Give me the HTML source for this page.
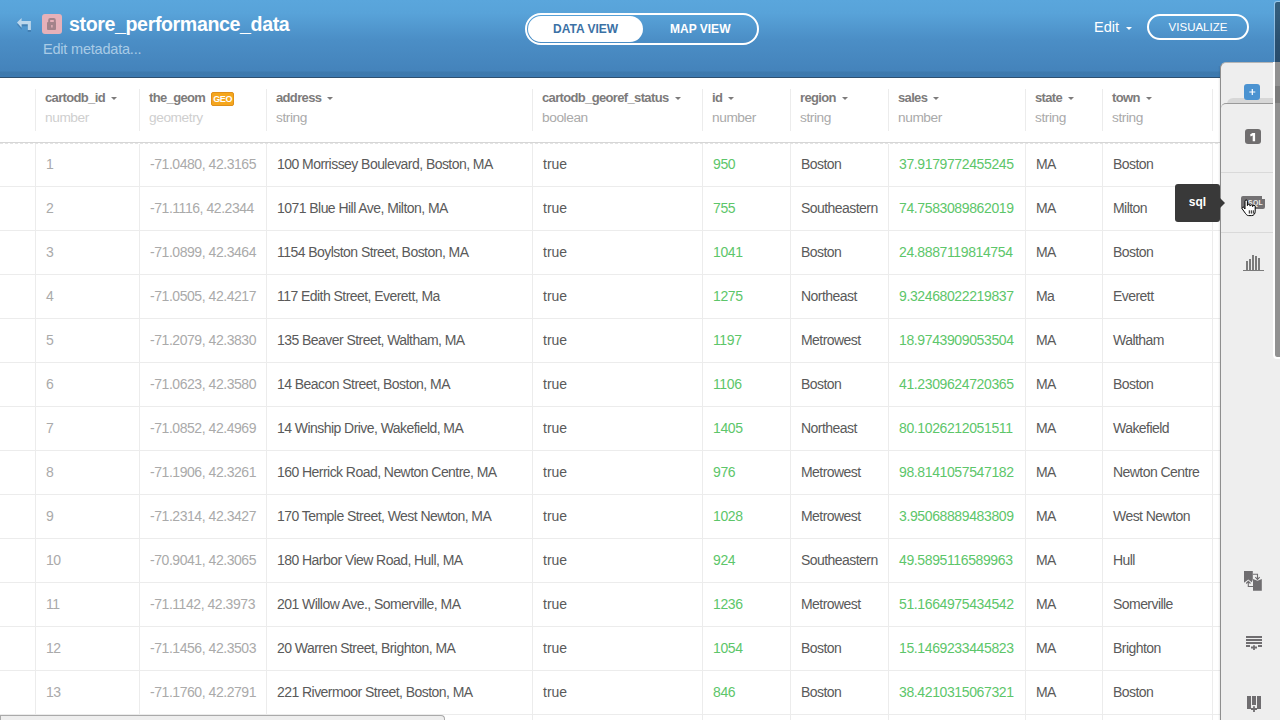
<!DOCTYPE html><html><head><meta charset="utf-8"><title>store_performance_data</title><style>
html,body{margin:0;padding:0;width:1280px;height:720px;overflow:hidden;background:#fff;font-family:"Liberation Sans",sans-serif;}
*{box-sizing:border-box;}
#hdr{position:absolute;left:0;top:0;width:1280px;height:78px;background:linear-gradient(#5aa6dc 0px,#58a3d9 13px,#4b8ec6 40px,#4483bb 71px,#3e7aae 72px,#3d79ad 75px,#3c7ab2 76px,#3c7ab2 77px);border-bottom:1px solid #2e5070;}
#back{position:absolute;left:17px;top:17px;width:16px;height:15px;}
#lock{position:absolute;left:42px;top:14px;width:20px;height:20px;background:#e6b1b9;border-radius:3px;}
#title{position:absolute;left:69px;top:11.6px;font-size:19.6px;font-weight:bold;color:#fff;letter-spacing:-0.38px;white-space:nowrap;line-height:24px;}
#meta{position:absolute;left:43px;top:39.5px;font-size:14.5px;color:#a9cbe6;white-space:nowrap;line-height:18px;letter-spacing:-0.2px;}
#tog{position:absolute;left:525px;top:13px;width:234px;height:32px;border:2px solid #fff;border-radius:16px;}
#tog .on{position:absolute;left:1px;top:1px;width:115px;height:26px;background:#fff;border-radius:13px;}
#tog .t1{position:absolute;left:26px;top:0;line-height:28px;font-size:12px;font-weight:bold;color:#3b71a5;white-space:nowrap;}
#tog .t2{position:absolute;left:143px;top:0;line-height:28px;font-size:12px;font-weight:bold;color:#fff;white-space:nowrap;}
#edit{position:absolute;left:1094px;top:17px;font-size:14.5px;color:#fff;line-height:20px;white-space:nowrap;}
#editcar{position:absolute;left:1126px;top:27px;width:0;height:0;border-left:3px solid transparent;border-right:3px solid transparent;border-top:3px solid #fff;}
#vis{position:absolute;left:1147px;top:14px;width:102px;height:26px;border:2px solid #fff;border-radius:13px;color:#fff;font-size:11.5px;line-height:22px;text-align:center;white-space:nowrap;}
#tbl{position:absolute;left:0;top:0;width:1280px;height:720px;}
.vd{position:absolute;top:143px;width:1px;height:577px;background:#ececec;}
.vdh{position:absolute;top:89px;width:1px;height:42px;background:#ececec;}
.hb{position:absolute;left:0;top:142px;width:1220px;height:1px;background:#d6d6d6;}
.hbd{position:absolute;left:0;top:143px;width:1220px;height:1px;background:repeating-linear-gradient(90deg,#e4e4e4 0 3px,#fff 3px 5px);}
.rl{position:absolute;left:0;width:1220px;height:1px;background:#ececec;}
.hn{position:absolute;top:89px;font-size:13px;font-weight:bold;color:#7d7b7b;white-space:nowrap;line-height:18px;letter-spacing:-0.65px;}
.ht{position:absolute;top:108.5px;font-size:13.7px;color:#aaaaaa;white-space:nowrap;line-height:18px;letter-spacing:-0.42px;}
.ht.lt{color:#cfcfcf;}
.car{display:inline-block;margin-left:6px;vertical-align:middle;width:0;height:0;border-left:3px solid transparent;border-right:3px solid transparent;border-top:3px solid #7d7b7b;position:relative;top:0px;}
.gbadge{display:inline-block;margin-left:6px;width:23px;height:14px;background:#f5a61d;border:1px solid #e0901a;border-radius:2px;color:#fff;font-weight:bold;font-size:9px;line-height:13px;text-align:center;vertical-align:top;position:relative;top:3px;letter-spacing:-0.3px;}
.c{position:absolute;height:43px;line-height:43px;font-size:14px;white-space:nowrap;letter-spacing:-0.55px;}
.c.num{color:#aaaaaa;}
.c.geo{color:#aaaaaa;letter-spacing:-0.45px;}
.c.txt{color:#5a5a5a;}
.c.bool{color:#5a5a5a;letter-spacing:0;}
.c.grn{color:#5dc66a;letter-spacing:-0.38px;}
#side{position:absolute;left:1218px;top:62px;width:62px;height:658px;}
#side .shadow{position:absolute;left:0;top:4px;width:3px;height:654px;background:linear-gradient(90deg,rgba(0,0,0,0) ,rgba(0,0,0,0.12));}
#side .panel{position:absolute;left:2px;top:0;width:60px;height:658px;background:#eeeeee;border-left:1px solid #8e8e8e;border-top:1px solid #b5b5b5;border-top-left-radius:6px;}
#side .plus{position:absolute;left:26px;top:22px;width:16px;height:16px;background:#4b93d1;border-radius:3px;}
#side .shade{position:absolute;left:9px;top:36px;width:47px;height:6px;background:#d7d7d7;border-top-left-radius:6px;}
#side .tab2{position:absolute;left:3px;top:41px;width:59px;height:617px;background:#eeeeee;border-top:1px solid #9a9a9a;border-top-left-radius:5px;}
#side .one{position:absolute;left:27px;top:67px;width:16px;height:15px;background:#706e6f;border-radius:3px;color:#fff;font-weight:bold;font-size:11px;line-height:15px;text-align:center;}
#side .sep{position:absolute;left:3px;width:54px;height:1px;background:#d9d9d9;}
#side svg{position:absolute;}
#tip{position:absolute;left:1175px;top:184px;width:45px;height:38px;background:#393939;border-radius:3px;color:#fff;font-weight:bold;font-size:12px;line-height:37px;text-align:center;}
#tip:after{content:"";position:absolute;left:45px;top:14px;border-top:5px solid transparent;border-bottom:5px solid transparent;border-left:5px solid #393939;}
#scr{position:absolute;left:1274px;top:1px;width:6px;height:357px;border:1px solid rgba(255,255,255,0.35);border-right:0;border-radius:3px 0 0 3px;background:rgba(0,0,0,0.43);background-clip:padding-box;}
#scr2{position:absolute;left:1275px;top:86px;width:5px;height:17px;background:rgba(0,0,0,0.15);}
#bot{position:absolute;left:0;top:715px;width:445px;height:10px;background:#eeeeee;border-top:1px solid #aaaaaa;border-left:1px solid #aaaaaa;border-right:1px solid #aaaaaa;border-top-right-radius:4px;}
#scrw{position:absolute;left:1273px;top:62px;width:8px;height:297px;background:#fff;border-bottom-left-radius:4px;}

</style></head><body>
<div id="hdr">
<svg id="back" width="16" height="15" viewBox="0 0 16 15"><path d="M0 6.4 L4.6 2 L4.6 5 L13.9 5 L13.9 13.9 L10.8 13.9 L10.8 8.3 L4.6 8.3 L4.6 11.8 Z" fill="#2f5f8e" opacity="0.4" transform="translate(0,1)"/><path d="M0 5.4 L4.6 1 L4.6 4 L13.9 4 L13.9 12.9 L10.8 12.9 L10.8 7.3 L4.6 7.3 L4.6 10.8 Z" fill="#bcd7ec"/></svg>
<div id="lock"><svg width="20" height="20" viewBox="0 0 20 20"><path d="M7.2 9V6 a1 1 0 0 1 1-1 H11.8 a1 1 0 0 1 1 1 V9" fill="none" stroke="#a3838a" stroke-width="2"/><rect x="5" y="8" width="9" height="8" rx="1" fill="#a3838a"/><rect x="9.2" y="11" width="1.4" height="2.5" fill="#e6b1b9"/></svg></div>
<div id="title">store_performance_data</div>
<div id="meta">Edit metadata...</div>
<div id="tog"><div class="on"></div><div class="t1">DATA VIEW</div><div class="t2">MAP VIEW</div></div>
<div id="edit">Edit</div><div id="editcar"></div>
<div id="vis">VISUALIZE</div>
</div>

<div id="tbl">
<div class="vd" style="left:35px"></div>
<div class="vdh" style="left:35px"></div>
<div class="vd" style="left:139px"></div>
<div class="vdh" style="left:139px"></div>
<div class="vd" style="left:266px"></div>
<div class="vdh" style="left:266px"></div>
<div class="vd" style="left:532px"></div>
<div class="vdh" style="left:532px"></div>
<div class="vd" style="left:702px"></div>
<div class="vdh" style="left:702px"></div>
<div class="vd" style="left:790px"></div>
<div class="vdh" style="left:790px"></div>
<div class="vd" style="left:888px"></div>
<div class="vdh" style="left:888px"></div>
<div class="vd" style="left:1025px"></div>
<div class="vdh" style="left:1025px"></div>
<div class="vd" style="left:1102px"></div>
<div class="vdh" style="left:1102px"></div>
<div class="vd" style="left:1212px"></div>
<div class="vdh" style="left:1212px"></div>
<div class="hb"></div><div class="hbd"></div>
<div class="hn" style="left:45px">cartodb_id<span class="car"></span></div>
<div class="ht lt" style="left:45px">number</div>
<div class="hn" style="left:149px">the_geom<span class="gbadge">GEO</span></div>
<div class="ht lt" style="left:149px">geometry</div>
<div class="hn" style="left:276px">address<span class="car"></span></div>
<div class="ht" style="left:276px">string</div>
<div class="hn" style="left:542px">cartodb_georef_status<span class="car"></span></div>
<div class="ht" style="left:542px">boolean</div>
<div class="hn" style="left:712px">id<span class="car"></span></div>
<div class="ht" style="left:712px">number</div>
<div class="hn" style="left:800px">region<span class="car"></span></div>
<div class="ht" style="left:800px">string</div>
<div class="hn" style="left:898px">sales<span class="car"></span></div>
<div class="ht" style="left:898px">number</div>
<div class="hn" style="left:1035px">state<span class="car"></span></div>
<div class="ht" style="left:1035px">string</div>
<div class="hn" style="left:1112px">town<span class="car"></span></div>
<div class="ht" style="left:1112px">string</div>
<div class="rl" style="top:186px"></div>
<div class="c num" style="left:46px;top:143px">1</div>
<div class="c geo" style="left:150px;top:143px">-71.0480, 42.3165</div>
<div class="c txt" style="left:277px;top:143px">100 Morrissey Boulevard, Boston, MA</div>
<div class="c bool" style="left:543px;top:143px">true</div>
<div class="c grn" style="left:713px;top:143px">950</div>
<div class="c txt" style="left:801px;top:143px">Boston</div>
<div class="c grn" style="left:899px;top:143px">37.9179772455245</div>
<div class="c txt" style="left:1036px;top:143px">MA</div>
<div class="c txt" style="left:1113px;top:143px">Boston</div>
<div class="rl" style="top:230px"></div>
<div class="c num" style="left:46px;top:187px">2</div>
<div class="c geo" style="left:150px;top:187px">-71.1116, 42.2344</div>
<div class="c txt" style="left:277px;top:187px">1071 Blue Hill Ave, Milton, MA</div>
<div class="c bool" style="left:543px;top:187px">true</div>
<div class="c grn" style="left:713px;top:187px">755</div>
<div class="c txt" style="left:801px;top:187px">Southeastern</div>
<div class="c grn" style="left:899px;top:187px">74.7583089862019</div>
<div class="c txt" style="left:1036px;top:187px">MA</div>
<div class="c txt" style="left:1113px;top:187px">Milton</div>
<div class="rl" style="top:274px"></div>
<div class="c num" style="left:46px;top:231px">3</div>
<div class="c geo" style="left:150px;top:231px">-71.0899, 42.3464</div>
<div class="c txt" style="left:277px;top:231px">1154 Boylston Street, Boston, MA</div>
<div class="c bool" style="left:543px;top:231px">true</div>
<div class="c grn" style="left:713px;top:231px">1041</div>
<div class="c txt" style="left:801px;top:231px">Boston</div>
<div class="c grn" style="left:899px;top:231px">24.8887119814754</div>
<div class="c txt" style="left:1036px;top:231px">MA</div>
<div class="c txt" style="left:1113px;top:231px">Boston</div>
<div class="rl" style="top:318px"></div>
<div class="c num" style="left:46px;top:275px">4</div>
<div class="c geo" style="left:150px;top:275px">-71.0505, 42.4217</div>
<div class="c txt" style="left:277px;top:275px">117 Edith Street, Everett, Ma</div>
<div class="c bool" style="left:543px;top:275px">true</div>
<div class="c grn" style="left:713px;top:275px">1275</div>
<div class="c txt" style="left:801px;top:275px">Northeast</div>
<div class="c grn" style="left:899px;top:275px">9.32468022219837</div>
<div class="c txt" style="left:1036px;top:275px">Ma</div>
<div class="c txt" style="left:1113px;top:275px">Everett</div>
<div class="rl" style="top:362px"></div>
<div class="c num" style="left:46px;top:319px">5</div>
<div class="c geo" style="left:150px;top:319px">-71.2079, 42.3830</div>
<div class="c txt" style="left:277px;top:319px">135 Beaver Street, Waltham, MA</div>
<div class="c bool" style="left:543px;top:319px">true</div>
<div class="c grn" style="left:713px;top:319px">1197</div>
<div class="c txt" style="left:801px;top:319px">Metrowest</div>
<div class="c grn" style="left:899px;top:319px">18.9743909053504</div>
<div class="c txt" style="left:1036px;top:319px">MA</div>
<div class="c txt" style="left:1113px;top:319px">Waltham</div>
<div class="rl" style="top:406px"></div>
<div class="c num" style="left:46px;top:363px">6</div>
<div class="c geo" style="left:150px;top:363px">-71.0623, 42.3580</div>
<div class="c txt" style="left:277px;top:363px">14 Beacon Street, Boston, MA</div>
<div class="c bool" style="left:543px;top:363px">true</div>
<div class="c grn" style="left:713px;top:363px">1106</div>
<div class="c txt" style="left:801px;top:363px">Boston</div>
<div class="c grn" style="left:899px;top:363px">41.2309624720365</div>
<div class="c txt" style="left:1036px;top:363px">MA</div>
<div class="c txt" style="left:1113px;top:363px">Boston</div>
<div class="rl" style="top:450px"></div>
<div class="c num" style="left:46px;top:407px">7</div>
<div class="c geo" style="left:150px;top:407px">-71.0852, 42.4969</div>
<div class="c txt" style="left:277px;top:407px">14 Winship Drive, Wakefield, MA</div>
<div class="c bool" style="left:543px;top:407px">true</div>
<div class="c grn" style="left:713px;top:407px">1405</div>
<div class="c txt" style="left:801px;top:407px">Northeast</div>
<div class="c grn" style="left:899px;top:407px">80.1026212051511</div>
<div class="c txt" style="left:1036px;top:407px">MA</div>
<div class="c txt" style="left:1113px;top:407px">Wakefield</div>
<div class="rl" style="top:494px"></div>
<div class="c num" style="left:46px;top:451px">8</div>
<div class="c geo" style="left:150px;top:451px">-71.1906, 42.3261</div>
<div class="c txt" style="left:277px;top:451px">160 Herrick Road, Newton Centre, MA</div>
<div class="c bool" style="left:543px;top:451px">true</div>
<div class="c grn" style="left:713px;top:451px">976</div>
<div class="c txt" style="left:801px;top:451px">Metrowest</div>
<div class="c grn" style="left:899px;top:451px">98.8141057547182</div>
<div class="c txt" style="left:1036px;top:451px">MA</div>
<div class="c txt" style="left:1113px;top:451px">Newton Centre</div>
<div class="rl" style="top:538px"></div>
<div class="c num" style="left:46px;top:495px">9</div>
<div class="c geo" style="left:150px;top:495px">-71.2314, 42.3427</div>
<div class="c txt" style="left:277px;top:495px">170 Temple Street, West Newton, MA</div>
<div class="c bool" style="left:543px;top:495px">true</div>
<div class="c grn" style="left:713px;top:495px">1028</div>
<div class="c txt" style="left:801px;top:495px">Metrowest</div>
<div class="c grn" style="left:899px;top:495px">3.95068889483809</div>
<div class="c txt" style="left:1036px;top:495px">MA</div>
<div class="c txt" style="left:1113px;top:495px">West Newton</div>
<div class="rl" style="top:582px"></div>
<div class="c num" style="left:46px;top:539px">10</div>
<div class="c geo" style="left:150px;top:539px">-70.9041, 42.3065</div>
<div class="c txt" style="left:277px;top:539px">180 Harbor View Road, Hull, MA</div>
<div class="c bool" style="left:543px;top:539px">true</div>
<div class="c grn" style="left:713px;top:539px">924</div>
<div class="c txt" style="left:801px;top:539px">Southeastern</div>
<div class="c grn" style="left:899px;top:539px">49.5895116589963</div>
<div class="c txt" style="left:1036px;top:539px">MA</div>
<div class="c txt" style="left:1113px;top:539px">Hull</div>
<div class="rl" style="top:626px"></div>
<div class="c num" style="left:46px;top:583px">11</div>
<div class="c geo" style="left:150px;top:583px">-71.1142, 42.3973</div>
<div class="c txt" style="left:277px;top:583px">201 Willow Ave., Somerville, MA</div>
<div class="c bool" style="left:543px;top:583px">true</div>
<div class="c grn" style="left:713px;top:583px">1236</div>
<div class="c txt" style="left:801px;top:583px">Metrowest</div>
<div class="c grn" style="left:899px;top:583px">51.1664975434542</div>
<div class="c txt" style="left:1036px;top:583px">MA</div>
<div class="c txt" style="left:1113px;top:583px">Somerville</div>
<div class="rl" style="top:670px"></div>
<div class="c num" style="left:46px;top:627px">12</div>
<div class="c geo" style="left:150px;top:627px">-71.1456, 42.3503</div>
<div class="c txt" style="left:277px;top:627px">20 Warren Street, Brighton, MA</div>
<div class="c bool" style="left:543px;top:627px">true</div>
<div class="c grn" style="left:713px;top:627px">1054</div>
<div class="c txt" style="left:801px;top:627px">Boston</div>
<div class="c grn" style="left:899px;top:627px">15.1469233445823</div>
<div class="c txt" style="left:1036px;top:627px">MA</div>
<div class="c txt" style="left:1113px;top:627px">Brighton</div>
<div class="rl" style="top:714px"></div>
<div class="c num" style="left:46px;top:671px">13</div>
<div class="c geo" style="left:150px;top:671px">-71.1760, 42.2791</div>
<div class="c txt" style="left:277px;top:671px">221 Rivermoor Street, Boston, MA</div>
<div class="c bool" style="left:543px;top:671px">true</div>
<div class="c grn" style="left:713px;top:671px">846</div>
<div class="c txt" style="left:801px;top:671px">Boston</div>
<div class="c grn" style="left:899px;top:671px">38.4210315067321</div>
<div class="c txt" style="left:1036px;top:671px">MA</div>
<div class="c txt" style="left:1113px;top:671px">Boston</div>
</div>
<div id="side">
<div class="shadow"></div>
<div class="panel"></div>
<div class="shade"></div>
<div class="plus"><svg width="16" height="16" viewBox="0 0 16 16" style="left:0;top:0"><path d="M8.3 5v6M5.3 8h6" stroke="#fff" stroke-width="1.2"/></svg></div>
<div class="tab2"></div>
<div class="one"><svg width="16" height="15" viewBox="0 0 16 15" style="left:0;top:0"><path d="M7.4 4H10.1V12.2H7.7V6.6L5.6 7.6L5.1 5.6Z" fill="#ffffff"/></svg></div>
<div class="sep" style="top:110px"></div>
<div class="sep" style="top:170px"></div>
<svg style="left:23px;top:134px" width="25" height="14" viewBox="0 0 25 14"><path d="M0 2 a2 2 0 0 1 2-2 H21 V3 H24 V11 a2 2 0 0 1-2 2 H2 a2 2 0 0 1-2-2 Z" fill="#737173"/><text x="7" y="8.9" font-family="Liberation Sans" font-weight="bold" font-size="6.8" letter-spacing="0.4" fill="#f0f0f0">SQL</text></svg>
<svg style="left:23px;top:137px" width="18" height="19" viewBox="0 0 18 19"><path d="M4 9.5V2.2a1.2 1.2 0 0 1 2.4 0V6.6a1.3 1.3 0 0 1 2.6 0V7.1a1.3 1.3 0 0 1 2.6 0V7.6a1.3 1.3 0 0 1 2.6 0V12.2c0 2.6-1.4 4.4-3.6 4.4H7.6c-1.4 0-2.2-0.9-2.9-1.9L1.2 9.9a1.1 1.1 0 0 1 1.8-1.3L4 10Z" fill="#fff" stroke="#000" stroke-width="1"/><path d="M8.3 11.3V14.6M10.3 11.3V14.6M12.3 11.3V14.6" stroke="#000" stroke-width="0.9"/></svg>
<svg style="left:25px;top:192px" width="21" height="17" viewBox="0 0 21 17"><path d="M0 16.5H21" stroke="#7b7b7b" stroke-width="1"/><path d="M4 7v9M7 5v11M10 1v15M13 2v14M16 4v12" stroke="#7b7b7b" stroke-width="2"/></svg>
<svg style="left:24px;top:507px" width="22" height="24" viewBox="0 0 22 24"><path d="M2 2H10.8V10.5L9.8 13.3L6.3 10.5L2 13.7Z" fill="#6f6d70"/><path d="M11 10L15.5 11.8L19.8 10V21.8H11Z" fill="#6f6d70"/><path d="M10.8 5.2H15.5V10.3M13.3 8.2L15.5 10.4L17.7 8.2" stroke="#6f6d70" stroke-width="1.1" fill="none"/><path d="M11 17.5H6.3V12M4.2 14.5L6.3 12.3L8.5 14.5" stroke="#6f6d70" stroke-width="1.1" fill="none"/></svg>
<svg style="left:28px;top:574px" width="17" height="15" viewBox="0 0 17 15"><path d="M0 1H16M0 4H16M0 7H16M0 10H4M12 10H16" stroke="#6f6d70" stroke-width="1.8"/><path d="M8 9.3V14M5 11.5H11" stroke="#eeeeee" stroke-width="3.6"/><path d="M8 9.3V14M5 11.5H11" stroke="#6f6d70" stroke-width="1.8"/></svg>
<svg style="left:29px;top:634px" width="15" height="17" viewBox="0 0 15 17"><path d="M0 0H4V13H0ZM5 0H9V9H5ZM10 0H14V13H10Z" fill="#6f6d70"/><path d="M7 10V16M4 13H10" stroke="#eeeeee" stroke-width="3.6"/><path d="M7 10.3V16M4 13H10" stroke="#6f6d70" stroke-width="1.8"/></svg>
</div>
<div id="tip">sql</div>
<div id="scrw"></div><div id="scr"></div><div id="scr2"></div>
<div id="bot"></div>

</body></html>
